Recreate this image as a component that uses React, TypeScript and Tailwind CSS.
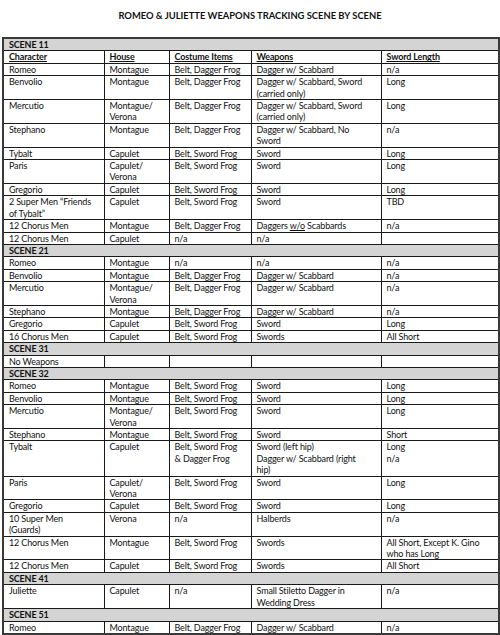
import React from "react";

type Row = {
  cells: React.ReactNode[];
};

type Section = {
  title: string;
  rows: Row[];
  header?: boolean;
};

const sections: Section[] = [
  {
    title: "SCENE 11",
    header: true,
    rows: [
      { cells: ["Romeo", "Montague", "Belt, Dagger Frog", "Dagger w/ Scabbard", "n/a"] },
      { cells: ["Benvolio", "Montague", "Belt, Dagger Frog", "Dagger w/ Scabbard, Sword (carried only)", "Long"] },
      { cells: ["Mercutio", "Montague/ Verona", "Belt, Dagger Frog", "Dagger w/ Scabbard, Sword (carried only)", "Long"] },
      { cells: ["Stephano", "Montague", "Belt, Dagger Frog", "Dagger w/ Scabbard, No Sword", "n/a"] },
      { cells: ["Tybalt", "Capulet", "Belt, Sword Frog", "Sword", "Long"] },
      { cells: ["Paris", "Capulet/ Verona", "Belt, Sword Frog", "Sword", "Long"] },
      { cells: ["Gregorio", "Capulet", "Belt, Sword Frog", "Sword", "Long"] },
      { cells: ["2 Super Men \u201cFriends of Tybalt\u201d", "Capulet", "Belt, Sword Frog", "Sword", "TBD"] },
      {
        cells: [
          "12 Chorus Men",
          "Montague",
          "Belt, Dagger Frog",
          <>
            Daggers <span className="underline">w/o</span> Scabbards
          </>,
          "n/a",
        ],
      },
      { cells: ["12 Chorus Men", "Capulet", "n/a", "n/a", ""] },
    ],
  },
  {
    title: "SCENE 21",
    rows: [
      { cells: ["Romeo", "Montague", "n/a", "n/a", "n/a"] },
      { cells: ["Benvolio", "Montague", "Belt, Dagger Frog", "Dagger w/ Scabbard", "n/a"] },
      { cells: ["Mercutio", "Montague/ Verona", "Belt, Dagger Frog", "Dagger w/ Scabbard", "n/a"] },
      { cells: ["Stephano", "Montague", "Belt, Dagger Frog", "Dagger w/ Scabbard", "n/a"] },
      { cells: ["Gregorio", "Capulet", "Belt, Sword Frog", "Sword", "Long"] },
      { cells: ["16 Chorus Men", "Capulet", "Belt, Sword Frog", "Swords", "All Short"] },
    ],
  },
  {
    title: "SCENE 31",
    rows: [{ cells: ["No Weapons", "", "", "", ""] }],
  },
  {
    title: "SCENE 32",
    rows: [
      { cells: ["Romeo", "Montague", "Belt, Sword Frog", "Sword", "Long"] },
      { cells: ["Benvolio", "Montague", "Belt, Sword Frog", "Sword", "Long"] },
      { cells: ["Mercutio", "Montague/ Verona", "Belt, Sword Frog", "Sword", "Long"] },
      { cells: ["Stephano", "Montague", "Belt, Sword Frog", "Sword", "Short"] },
      {
        cells: [
          "Tybalt",
          "Capulet",
          <>
            Belt, Sword Frog
            <br />& Dagger Frog
          </>,
          <>
            Sword (left hip)
            <br />
            Dagger w/ Scabbard (right
            <br />
            hip)
          </>,
          <>
            Long
            <br />
            n/a
          </>,
        ],
      },
      { cells: ["Paris", "Capulet/ Verona", "Belt, Sword Frog", "Sword", "Long"] },
      { cells: ["Gregorio", "Capulet", "Belt, Sword Frog", "Sword", "Long"] },
      {
        cells: [
          <>
            10 Super Men
            <br />
            (Guards)
          </>,
          "Verona",
          "n/a",
          "Halberds",
          "n/a",
        ],
      },
      { cells: ["12 Chorus Men", "Montague", "Belt, Sword Frog", "Swords", "All Short, Except K. Gino who has Long"] },
      { cells: ["12 Chorus Men", "Capulet", "Belt, Sword Frog", "Swords", "All Short"] },
    ],
  },
  {
    title: "SCENE 41",
    rows: [{ cells: ["Juliette", "Capulet", "n/a", "Small Stiletto Dagger in Wedding Dress", "n/a"] }],
  },
  {
    title: "SCENE 51",
    rows: [{ cells: ["Romeo", "Montague", "Belt, Dagger Frog", "Dagger w/ Scabbard", "n/a"] }],
  },
];

const headers = ["Character", "House", "Costume Items", "Weapons", "Sword Length"];

const cell = "border border-[#1a1a1a] px-[5px] py-0 align-top leading-[11.4px]";

export default function App() {
  return (
    <div
      className="w-[500px] h-[635px] bg-white text-[#111] overflow-hidden"
      style={{ fontFamily: "Lato, 'Open Sans', sans-serif" }}
    >
      <div className="pt-[9px] pb-[14px] text-center text-[9.4px] font-bold leading-[14px]">
        ROMEO &amp; JULIETTE WEAPONS TRACKING SCENE BY SCENE
      </div>
      <table className="ml-[2px] w-[496px] table-fixed border-collapse border-2 border-[#3a3a3a] text-[9px] tracking-[-0.15px]">
        <colgroup>
          <col className="w-[101px]" />
          <col className="w-[65px]" />
          <col className="w-[82px]" />
          <col className="w-[130px]" />
          <col className="w-[118px]" />
        </colgroup>
        <tbody>
          {sections.map((section) => (
            <React.Fragment key={section.title}>
              <tr className="bg-[#d4d4d4]">
                <td colSpan={5} className={`${cell} font-bold`}>
                  {section.title}
                </td>
              </tr>
              {section.header && (
                <tr>
                  {headers.map((h) => (
                    <td key={h} className={`${cell} font-bold underline`}>
                      {h}
                    </td>
                  ))}
                </tr>
              )}
              {section.rows.map((row, i) => (
                <tr key={i}>
                  {row.cells.map((c, j) => (
                    <td key={j} className={cell}>
                      {c}
                    </td>
                  ))}
                </tr>
              ))}
            </React.Fragment>
          ))}
        </tbody>
      </table>
    </div>
  );
}
